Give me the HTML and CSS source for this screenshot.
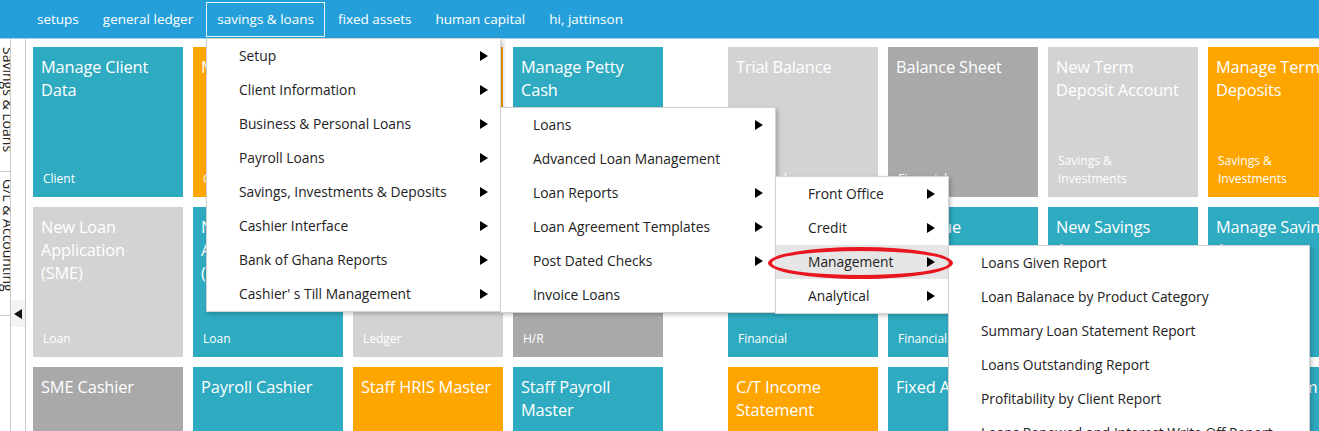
FILE: index.html
```html
<!DOCTYPE html>
<html lang="en">
<head>
<meta charset="utf-8">
<title>Savings &amp; Loans</title>
<link rel="stylesheet" href="styles.css">
</head>
<body>
<header class="topnav">
  <a class="nav-item">setups</a>
  <a class="nav-item">general ledger</a>
  <a class="nav-item active">savings &amp; loans</a>
  <a class="nav-item">fixed assets</a>
  <a class="nav-item">human capital</a>
  <a class="nav-item">hi, jattinson</a>
</header>

<div class="main">
  <aside class="sidebar">
    <div class="tabs">
      <div class="tab tab-1"><span class="tab-text">Savings &amp; Loans</span></div>
      <div class="tab tab-2"><span class="tab-text">G/L &amp; Accounting</span></div>
    </div>
    <div class="collapse-col">
      <div class="collapse-btn"><span class="tri-left"></span></div>
    </div>
  </aside>

  <section class="content">
    <div class="tile-group">
      <div class="tile teal"><div class="t-title">Manage Client Data</div><div class="t-label">Client</div></div>
      <div class="tile orange"><div class="t-title">Manage Deposits</div><div class="t-label">Client</div></div>
      <div class="tile orange"><div class="t-title">Manage Loans</div><div class="t-label">Loan</div></div>
      <div class="tile teal"><div class="t-title">Manage Petty Cash</div><div class="t-label">Ledger</div></div>

      <div class="tile light"><div class="t-title">New Loan Application<br>(SME)</div><div class="t-label">Loan</div></div>
      <div class="tile teal"><div class="t-title">New Loan Application<br>(Payroll)</div><div class="t-label">Loan</div></div>
      <div class="tile light"><div class="t-title">General Journal</div><div class="t-label">Ledger</div></div>
      <div class="tile dark"><div class="t-title">Staff Leave</div><div class="t-label">H/R</div></div>

      <div class="tile dark"><div class="t-title">SME Cashier</div><div class="t-label">Loan</div></div>
      <div class="tile teal"><div class="t-title">Payroll Cashier</div><div class="t-label">Loan</div></div>
      <div class="tile orange"><div class="t-title">Staff HRIS Master</div><div class="t-label">H/R</div></div>
      <div class="tile teal"><div class="t-title">Staff Payroll Master</div><div class="t-label">H/R</div></div>
    </div>

    <div class="tile-group">
      <div class="tile light"><div class="t-title">Trial Balance</div><div class="t-label">Financial</div></div>
      <div class="tile dark"><div class="t-title">Balance Sheet</div><div class="t-label">Financial</div></div>
      <div class="tile light"><div class="t-title">New Term Deposit Account</div><div class="t-label">Savings &amp; Investments</div></div>
      <div class="tile orange"><div class="t-title">Manage Term Deposits</div><div class="t-label">Savings &amp; Investments</div></div>

      <div class="tile teal"><div class="t-title">Income Statement</div><div class="t-label">Financial</div></div>
      <div class="tile teal"><div class="t-title">Revenue</div><div class="t-label">Financial</div></div>
      <div class="tile teal"><div class="t-title">New Savings Account</div><div class="t-label">Savings &amp; Investments</div></div>
      <div class="tile teal"><div class="t-title">Manage Savings Accounts</div><div class="t-label">Savings &amp; Investments</div></div>

      <div class="tile orange"><div class="t-title">C/T Income Statement</div><div class="t-label">Financial</div></div>
      <div class="tile teal"><div class="t-title">Fixed Assets</div><div class="t-label">Assets</div></div>
      <div class="tile teal"><div class="t-title">Asset Depreciation</div><div class="t-label">Assets</div></div>
      <div class="tile teal"><div class="t-title">Interest Term Redemption</div><div class="t-label">Savings</div></div>
    </div>
  </section>
</div>

<ul class="menu menu-1">
  <li class="m-item">Setup<span class="arrow"></span></li>
  <li class="m-item">Client Information<span class="arrow"></span></li>
  <li class="m-item">Business &amp; Personal Loans<span class="arrow"></span></li>
  <li class="m-item">Payroll Loans<span class="arrow"></span></li>
  <li class="m-item">Savings, Investments &amp; Deposits<span class="arrow"></span></li>
  <li class="m-item">Cashier Interface<span class="arrow"></span></li>
  <li class="m-item">Bank of Ghana Reports<span class="arrow"></span></li>
  <li class="m-item">Cashier' s Till Management<span class="arrow"></span></li>
</ul>

<ul class="menu menu-2">
  <li class="m-item">Loans<span class="arrow"></span></li>
  <li class="m-item">Advanced Loan Management</li>
  <li class="m-item">Loan Reports<span class="arrow"></span></li>
  <li class="m-item">Loan Agreement Templates<span class="arrow"></span></li>
  <li class="m-item">Post Dated Checks<span class="arrow"></span></li>
  <li class="m-item">Invoice Loans</li>
</ul>

<ul class="menu menu-3">
  <li class="m-item">Front Office<span class="arrow"></span></li>
  <li class="m-item">Credit<span class="arrow"></span></li>
  <li class="m-item hover">Management<span class="arrow"></span></li>
  <li class="m-item">Analytical<span class="arrow"></span></li>
</ul>

<ul class="menu menu-4">
  <li class="m-item">Loans Given Report</li>
  <li class="m-item">Loan Balanace by Product Category</li>
  <li class="m-item">Summary Loan Statement Report</li>
  <li class="m-item">Loans Outstanding Report</li>
  <li class="m-item">Profitability by Client Report</li>
  <li class="m-item">Loans Renewed and Interest Write Off Report</li>
</ul>

<div class="highlight-ring"></div>
</body>
</html>
```

FILE: styles.css
```css
* { box-sizing: border-box; }

html, body {
  margin: 0;
  padding: 0;
  height: 100%;
  overflow: hidden;
  background: #ffffff;
  font-family: "Open Sans", "Noto Sans", "Liberation Sans", sans-serif;
}

/* ---------- top navigation ---------- */
.topnav {
  height: 39px;
  background: #259fd9;
  border-bottom: 1px solid #9fd2ef;
  display: flex;
  align-items: flex-start;
  padding-left: 26px;
}

.nav-item {
  display: flex;
  align-items: center;
  height: 35px;
  margin-top: 2px;
  margin-right: 2px;
  padding: 0 10px 2px 10px;
  border: 1px solid transparent;
  color: #ffffff;
  font-size: 13.5px;
  text-decoration: none;
  white-space: nowrap;
}

.nav-item.active {
  border-color: #e9f5fc;
}

/* ---------- main area ---------- */
.main {
  display: flex;
  height: calc(100% - 39px);
}

.sidebar {
  display: flex;
  flex: 0 0 26px;
}

.tabs {
  width: 11px;
  border-right: 1px solid #c9c9c9;
  display: flex;
  flex-direction: column;
  overflow: hidden;
}

.tab {
  border-bottom: 1px solid #c9c9c9;
  overflow: hidden;
  padding-top: 8px;
}

.tab-1 { height: 133px; }
.tab-2 { height: 144px; padding-top: 7px; }

.tab-text {
  display: block;
  writing-mode: vertical-rl;
  font-size: 14px;
  line-height: 16px;
  width: 16px;
  color: #222222;
  white-space: nowrap;
}

.collapse-col {
  width: 15px;
  border-right: 1px solid #c9c9c9;
}

.collapse-btn {
  margin-top: 261px;
  height: 27px;
  background: #f3f3f3;
  display: flex;
  align-items: center;
  justify-content: center;
}

.tri-left {
  width: 0;
  height: 0;
  border-top: 5px solid transparent;
  border-bottom: 5px solid transparent;
  border-right: 8px solid #111111;
}

/* ---------- tiles ---------- */
.content {
  display: flex;
  gap: 65px;
  padding: 8px 0 0 7px;
}

.tile-group {
  display: grid;
  grid-template-columns: repeat(4, 150px);
  grid-auto-rows: 150px;
  gap: 10px;
}

.tile {
  display: flex;
  flex-direction: column;
  justify-content: space-between;
  padding: 8px 4px 9px 8px;
  color: #ffffff;
}

.t-title {
  font-size: 16.4px;
  line-height: 23px;
  letter-spacing: -0.15px;
}

.t-label {
  font-size: 12px;
  line-height: 18px;
  padding-left: 2px;
  padding-right: 20px;
}

.teal   { background: #2eaac1; }
.orange { background: #ffa500; }
.light  { background: #d3d3d3; }
.dark   { background: #a9a9a9; }

/* ---------- dropdown menus ---------- */
.menu {
  position: absolute;
  margin: 0;
  padding: 0;
  list-style: none;
  background: #ffffff;
  border: 1px solid #d2d2d2;
  box-shadow: 2px 2px 4px rgba(0, 0, 0, 0.22);
}

.m-item {
  position: relative;
  height: 34px;
  line-height: 34px;
  padding-left: 32px;
  font-size: 13.8px;
  color: #222222;
  white-space: nowrap;
}

.m-item.hover { background: #e6e6e6; }

.arrow {
  position: absolute;
  right: 12px;
  top: 12px;
  width: 0;
  height: 0;
  border-top: 5px solid transparent;
  border-bottom: 5px solid transparent;
  border-left: 8px solid #000000;
}

.menu-1 { left: 206px; top: 38px;  width: 295px; z-index: 1; }
.menu-2 { left: 500px; top: 107px; width: 276px; z-index: 2; }
.menu-3 { left: 775px; top: 176px; width: 174px; z-index: 3; }
.menu-4 { left: 948px; top: 245px; width: 362px; z-index: 4; }

.menu-3 .arrow { right: 13px; }

.highlight-ring {
  position: absolute;
  left: 768px;
  top: 247px;
  width: 185px;
  height: 32px;
  border: 4px solid #e8161f;
  border-radius: 50%;
  z-index: 5;
}
```
